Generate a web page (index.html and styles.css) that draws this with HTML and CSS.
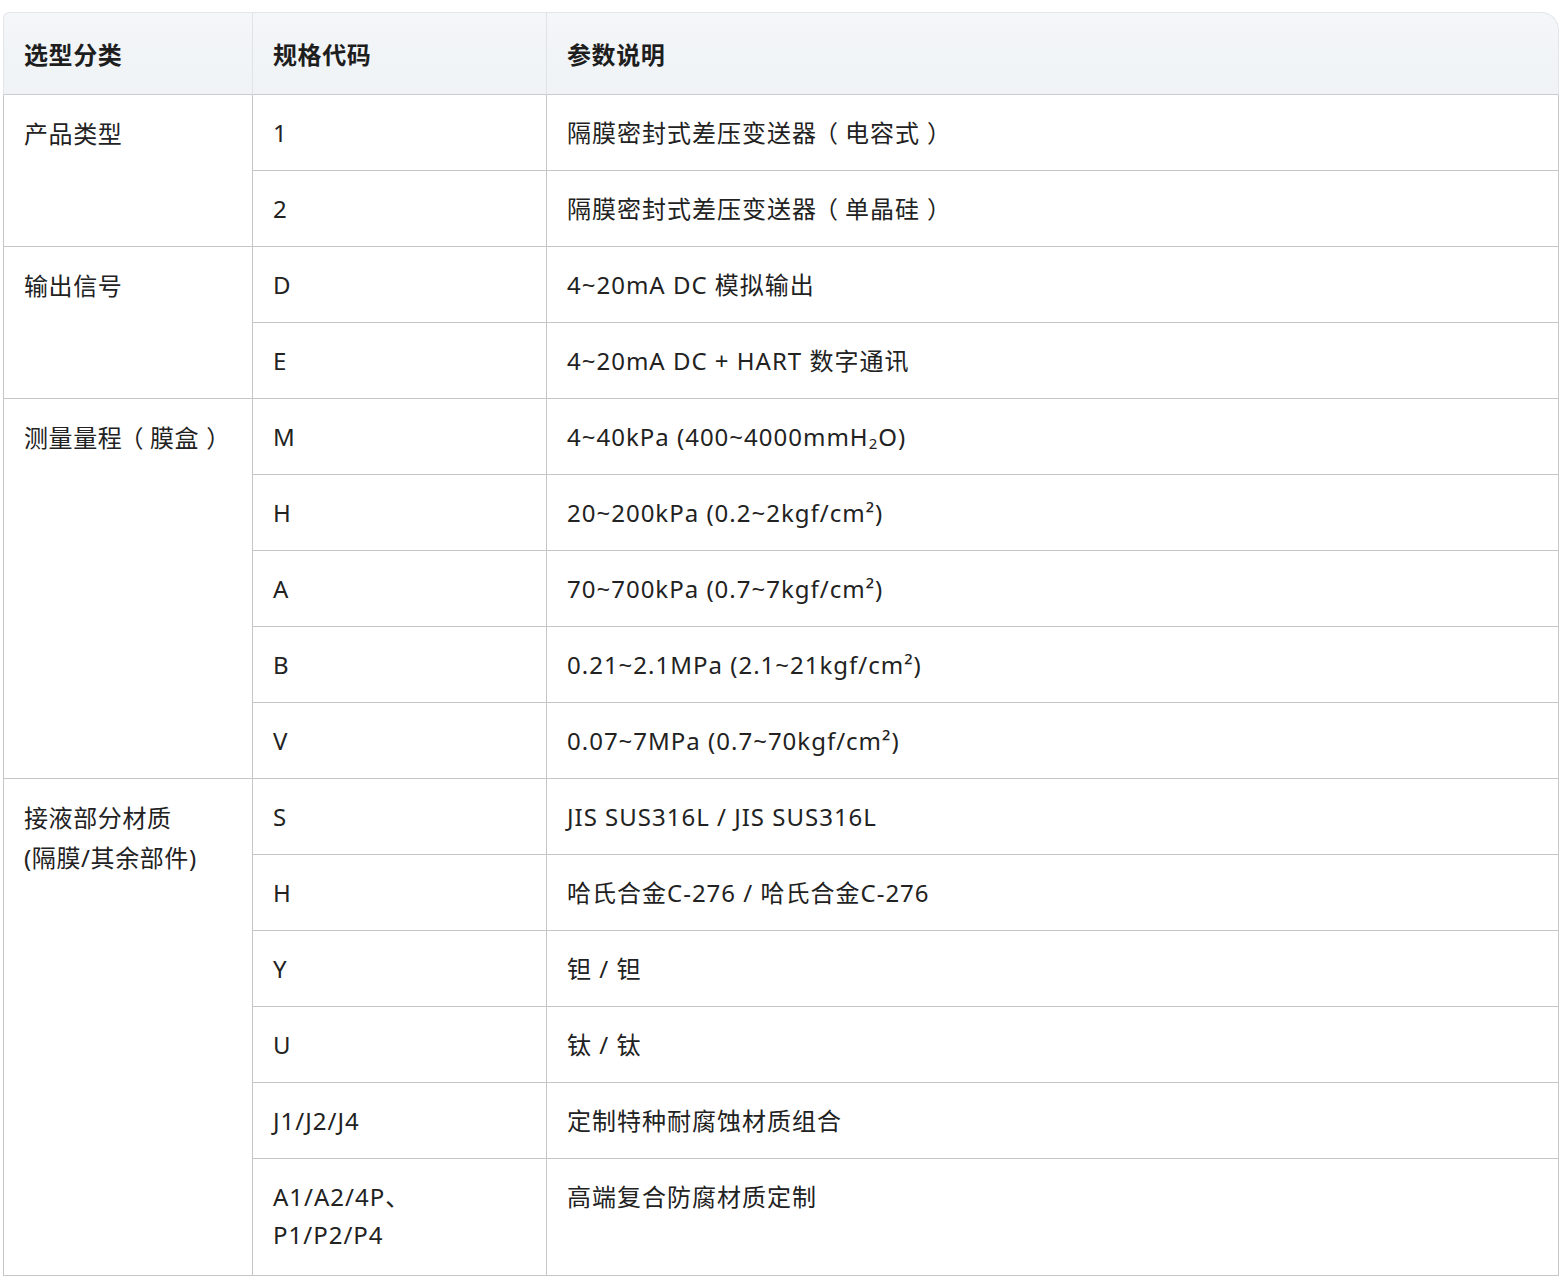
FILE: index.html
```html
<!DOCTYPE html>
<html lang="zh-CN">
<head>
<meta charset="utf-8">
<title>选型表</title>
<link rel="stylesheet" href="styles.css">
</head>
<body>
<table class="spec">
  <colgroup>
    <col class="c1"><col class="c2"><col class="c3">
  </colgroup>
  <thead>
    <tr><th class="first">选型分类</th><th>规格代码</th><th class="last">参数说明</th></tr>
  </thead>
  <tbody>
    <tr><td class="cat" rowspan="2">产品类型</td><td>1</td><td>隔膜密封式差压变送器<span class="lp">（</span>电容式<span class="rp">）</span></td></tr>
    <tr><td>2</td><td>隔膜密封式差压变送器<span class="lp">（</span>单晶硅<span class="rp">）</span></td></tr>
    <tr><td class="cat" rowspan="2">输出信号</td><td>D</td><td>4~20mA DC 模拟输出</td></tr>
    <tr><td>E</td><td>4~20mA DC + HART 数字通讯</td></tr>
    <tr><td class="cat" rowspan="5">测量量程<span class="lp">（</span>膜盒<span class="rp">）</span></td><td>M</td><td>4~40kPa (400~4000mmH<sub>2</sub>O)</td></tr>
    <tr><td>H</td><td>20~200kPa (0.2~2kgf/cm²)</td></tr>
    <tr><td>A</td><td>70~700kPa (0.7~7kgf/cm²)</td></tr>
    <tr><td>B</td><td>0.21~2.1MPa (2.1~21kgf/cm²)</td></tr>
    <tr><td>V</td><td>0.07~7MPa (0.7~70kgf/cm²)</td></tr>
    <tr><td class="cat" rowspan="6">接液部分材质<br>(隔膜/其余部件)</td><td>S</td><td>JIS SUS316L / JIS SUS316L</td></tr>
    <tr><td>H</td><td>哈氏合金C-276 / 哈氏合金C-276</td></tr>
    <tr><td>Y</td><td>钽 / 钽</td></tr>
    <tr><td>U</td><td>钛 / 钛</td></tr>
    <tr><td>J1/J2/J4</td><td>定制特种耐腐蚀材质组合</td></tr>
    <tr class="lastrow"><td>A1/A2/4P、<br>P1/P2/P4</td><td>高端复合防腐材质定制</td></tr>
  </tbody>
</table>
</body>
</html>
```

FILE: styles.css
```css
html, body {
  margin: 0;
  padding: 0;
  background: #ffffff;
}

body {
  padding: 12px 0 0 3px;
  font-family: "Noto Sans", "Noto Sans CJK SC", sans-serif;
  color: #222222;
}

.spec {
  width: 1556px;
  table-layout: fixed;
  border-collapse: separate;
  border-spacing: 0;
  font-size: 24px;
  letter-spacing: 1px;
}

.c1 { width: 250px; }
.c2 { width: 294px; }

.spec th,
.spec td {
  text-align: left;
  vertical-align: top;
  padding: 19px 20px 18px 20px;
  line-height: 38px;
  border-right: 1px solid #c6c6c6;
  border-bottom: 1px solid #c6c6c6;
}

.spec th {
  font-weight: 700;
  letter-spacing: 0.6px;
  background: linear-gradient(180deg, #f4f6f8 0%, #eff3f6 100%);
  padding: 23px 20px 20px 20px;
  border-top: 1px solid #e2e6ea;
  border-right: 1px solid #dfe3e7;
  border-bottom: 1px solid #c9ccd0;
  color: #1e1e1e;
}

.spec th.first {
  border-left: 1px solid #e2e6ea;
  border-top-left-radius: 6px;
}

.spec th.last {
  border-right: 1px solid #e2e6ea;
  border-top-right-radius: 18px;
}

.spec td.cat {
  border-left: 1px solid #c6c6c6;
  line-height: 40px;
  letter-spacing: 0.6px;
}

.spec tr.lastrow td {
  padding-bottom: 21px;
}

.lp {
  margin-left: -3px;
  margin-right: 6px;
}

.rp {
  margin-left: 7px;
  margin-right: -3px;
}

.spec sub {
  font-size: 15px;
  line-height: 0;
  vertical-align: -3px;
}
```
